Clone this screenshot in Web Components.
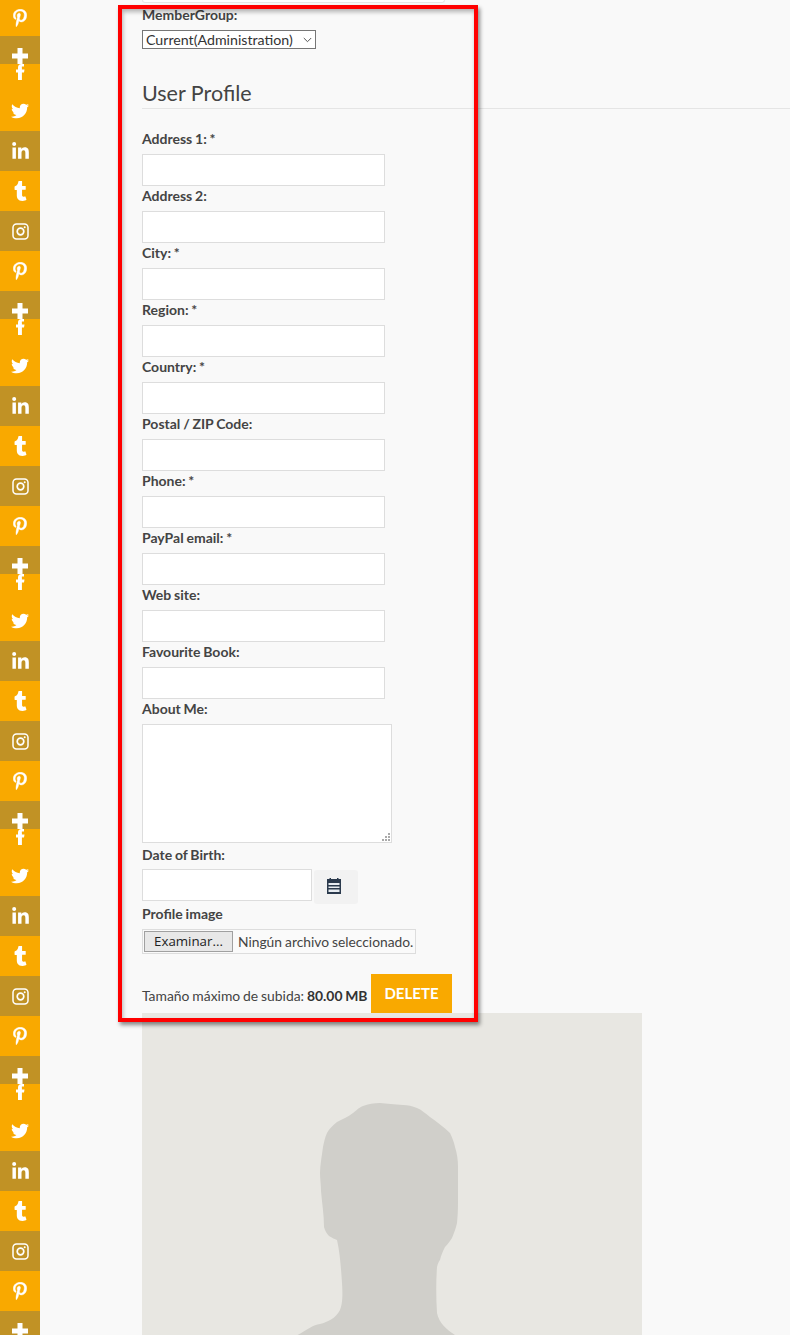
<!DOCTYPE html>
<html lang="en">
<head>
<meta charset="utf-8">
<title>User Profile</title>
<style>
  html, body { margin: 0; padding: 0; background: #f9f9f9; }
  body { font-family: Lato, "Liberation Sans", sans-serif; }
</style>
</head>
<body>
<profile-page>
  <social-rail slot="rail"></social-rail>

  <form-select label="MemberGroup:" value="Current(Administration)"></form-select>
  <section-title>User Profile</section-title>

  <text-field label="Address 1: *"></text-field>
  <text-field label="Address 2:"></text-field>
  <text-field label="City: *"></text-field>
  <text-field label="Region: *"></text-field>
  <text-field label="Country: *"></text-field>
  <text-field label="Postal / ZIP Code:"></text-field>
  <text-field label="Phone: *"></text-field>
  <text-field label="PayPal email: *"></text-field>
  <text-field label="Web site:"></text-field>
  <text-field label="Favourite Book:"></text-field>
  <area-field label="About Me:"></area-field>
  <date-field label="Date of Birth:"></date-field>
  <file-field label="Profile image" button="Examinar..." empty="Ningún archivo seleccionado."></file-field>
  <upload-limit size="80.00 MB">Tamaño máximo de subida:</upload-limit>
  <avatar-placeholder></avatar-placeholder>
</profile-page>

<script>
const fieldStyle = `
  label {
    display: block;
    font: bold 14px/19px Lato, "Liberation Sans", sans-serif;
    word-spacing: -.6px;
    color: #444;
    margin-bottom: 6px;
  }
  input, textarea {
    display: block;
    box-sizing: border-box;
    margin: 0;
    padding: 4px 8px;
    background: #fff;
    border: 1px solid #ddd;
    border-radius: 0;
    outline: none;
  }
`;

const ICONS = {
  pinterest: '<svg width="14" height="18" viewBox="0 0 384 512"><path fill="#fff" stroke="#fff" stroke-width="12" d="M204 6.5C101.4 6.5 0 74.9 0 185.6 0 256 39.6 296 63.6 296c9.9 0 15.6-27.6 15.6-35.4 0-9.3-23.7-29.1-23.7-67.8 0-80.4 61.2-137.4 140.4-137.4 68.1 0 118.5 38.7 118.5 109.8 0 53.1-21.3 152.7-90.3 152.7-24.9 0-46.2-18-46.2-43.8 0-37.8 26.4-74.4 26.4-113.4 0-66.2-93.9-54.2-93.9 25.8 0 16.8 2.1 35.4 9.6 50.7-13.8 59.4-42 147.9-42 209.1 0 18.9 2.7 37.5 4.5 56.4 3.4 3.8 1.7 3.4 6.9 1.5 50.4-69 48.6-82.5 71.4-172.8 12.3 23.4 44.1 36 69.3 36 106.2 0 153.9-103.5 153.9-196.8C384 71.3 298.2 6.5 204 6.5z"/></svg>',
  plus: '<svg width="16" height="16" viewBox="0 0 16 16"><path fill="#fff" d="M5.500 0h5v5.500H16v5h-5.500V16h-5v-5.500H0v-5h5.500z"/></svg>',
  facebook: '<svg width="10" height="16" viewBox="0 0 10 16"><path fill="#fff" d="M3 16V8.500H1V5.500h2V3.600C3 1.200 4.300 0 6.500 0H9v2.500H7.400C6.500 2.500 6.900 3.200 6.900 4v1.500H9.500L9 8.500H6.900V16z"/></svg>',
  twitter: '<svg width="18" height="18" viewBox="0 0 512 512"><path fill="#fff" d="M459.37 151.716c.325 4.548.325 9.097.325 13.645 0 138.72-105.583 298.558-298.558 298.558-59.452 0-114.68-17.219-161.137-47.106 8.447.974 16.568 1.299 25.34 1.299 49.055 0 94.213-16.568 130.274-44.832-46.132-.975-84.792-31.188-98.112-72.772 6.498.974 12.995 1.624 19.818 1.624 9.421 0 18.843-1.3 27.614-3.573-48.081-9.747-84.143-51.98-84.143-102.985v-1.299c13.969 7.797 30.214 12.67 47.431 13.319-28.264-18.843-46.781-51.005-46.781-87.391 0-19.492 5.197-37.36 14.294-52.954 51.655 63.675 129.3 105.258 216.365 109.807-1.624-7.797-2.599-15.918-2.599-24.04 0-57.828 46.782-104.934 104.934-104.934 30.213 0 57.502 12.67 76.67 33.137 23.715-4.548 46.456-13.645 66.599-25.665-7.798 24.366-23.69 45.283-45.283 57.93 21.117-2.274 41.584-8.122 60.426-16.243-14.292 20.791-32.161 39.308-52.628 54.253z"/></svg>',
  linkedin: '<svg width="17" height="19" viewBox="0 0 448 512"><path fill="#fff" d="M100.28 448H7.4V148.9h92.88zM53.79 108.1C24.09 108.1 0 83.5 0 53.8a53.79 53.79 0 0 1 107.58 0c0 29.7-24.1 54.3-53.79 54.3zM447.9 448h-92.68V302.4c0-34.7-.7-79.2-48.29-79.2-48.29 0-55.69 37.7-55.69 76.7V448h-92.78V148.9h89.08v40.8h1.3c12.4-23.5 42.69-48.3 87.88-48.3 94 0 111.28 61.9 111.28 142.3V448z"/></svg>',
  tumblr: '<svg width="13" height="20" viewBox="0 0 320 512"><path fill="#fff" d="M309.8 480.3c-13.6 14.5-50 31.7-97.4 31.7-120.8 0-147-88.8-147-140.6v-144H17.9c-5.500 0-10-4.500-10-10v-68c0-7.200 4.500-13.600 11.300-16 62-21.800 81.500-76 84.300-117.100.8-11 6.500-16.300 16.100-16.300h70.900c5.500 0 10 4.500 10 10v115.200h83c5.500 0 10 4.400 10 9.900v81.700c0 5.500-4.500 10-10 10h-83.400V360c0 34.200 23.700 53.600 68 35.800 4.800-1.900 9-3.200 12.700-2.200 3.500.9 5.800 3.400 7.400 7.900l22 64.300c1.800 5 3.300 10.600-.4 14.500z"/></svg>',
  instagram: '<svg width="17" height="17" viewBox="0 0 17 17"><rect x="1" y="1" width="15" height="15" rx="3.500" fill="none" stroke="#fff" stroke-width="1.500"/><circle cx="8.500" cy="8.500" r="3.300" fill="none" stroke="#fff" stroke-width="1.700"/><circle cx="12.700" cy="4.300" r="1" fill="#fff"/></svg>'
};

// one turn of the rail, it repeats every 255px
const RAIL_TURN = [
  { icon: 'plus', height: 28, pad: 12, dark: true },
  { icon: 'facebook', height: 27, pad: 0 },
  { icon: 'twitter', height: 40 },
  { icon: 'linkedin', height: 40, dark: true },
  { icon: 'tumblr', height: 40 },
  { icon: 'instagram', height: 40, dark: true },
  { icon: 'pinterest', height: 40 }
];

window.customElements.define('social-rail', class SocialRail extends HTMLElement {
  constructor() {
    super();
    const root = this.attachShadow({ mode: 'open' });
    const cell = (item) => {
      const top = item.pad !== undefined;
      return `<div class="cell${item.dark ? ' dark' : ''}${top ? ' top' : ''}" style="height:${item.height}px;${top ? `padding-top:${item.pad}px` : ''}">${ICONS[item.icon]}</div>`;
    };
    let cells = cell({ icon: 'pinterest', height: 36 });
    for (let i = 0; i < 6; i++) {
      cells += RAIL_TURN.map(cell).join('');
    }
    root.innerHTML = `
      <style>
        :host { display: flex; flex-direction: column; width: 40px; height: 1335px; overflow: hidden; }
        .cell {
          flex: none;
          box-sizing: border-box;
          display: flex;
          align-items: center;
          justify-content: center;
          background: #f9a900;
        }
        .cell.top { align-items: flex-start; }
        .cell.dark { background: #c19225; }
        svg { display: block; }
      </style>
      ${cells}
    `;
  }
});

window.customElements.define('form-select', class FormSelect extends HTMLElement {
  constructor() {
    super();
    this.attachShadow({ mode: 'open' }).innerHTML = `
      <style>
        ${fieldStyle}
        :host { display: block; }
        .box { position: relative; width: 174px; height: 19px; }
        select {
          appearance: none;
          display: block;
          box-sizing: border-box;
          width: 174px;
          height: 19px;
          margin: 0;
          padding: 0 0 0 3px;
          background: #fff;
          border: 1px solid #767676;
          border-radius: 0;
          color: #333;
          font: 14.200px/17px Lato, "Liberation Sans", sans-serif;
        }
        svg { position: absolute; right: 4px; top: 7px; }
      </style>
      <label>${this.getAttribute('label')}</label>
      <div class="box">
        <select><option>${this.getAttribute('value')}</option></select>
        <svg width="9" height="6" viewBox="0 0 9 6"><path d="M.8 1l3.700 3.700L8.200 1" fill="none" stroke="#555" stroke-width="1"/></svg>
      </div>
    `;
  }
});

window.customElements.define('section-title', class SectionTitle extends HTMLElement {
  constructor() {
    super();
    this.attachShadow({ mode: 'open' }).innerHTML = `
      <style>
        :host {
          display: block;
          margin: 30px -148px 20px 0;
          padding-bottom: 1px;
          border-bottom: 1px solid #e5e5e5;
          font: 21.500px/28px Lato, "Liberation Sans", sans-serif;
          color: #444;
        }
      </style>
      <slot></slot>
    `;
  }
});

window.customElements.define('text-field', class TextField extends HTMLElement {
  constructor() {
    super();
    this.attachShadow({ mode: 'open' }).innerHTML = `
      <style>
        ${fieldStyle}
        :host { display: block; }
        input { width: 243px; height: 32px; }
      </style>
      <label>${this.getAttribute('label')}</label>
      <input type="text">
    `;
  }
});

window.customElements.define('area-field', class AreaField extends HTMLElement {
  constructor() {
    super();
    this.attachShadow({ mode: 'open' }).innerHTML = `
      <style>
        ${fieldStyle}
        :host { display: block; }
        .box { position: relative; width: 250px; height: 119px; margin-bottom: 2px; }
        textarea { width: 250px; height: 119px; resize: none; }
        svg { position: absolute; right: 2px; bottom: 2px; }
      </style>
      <label>${this.getAttribute('label')}</label>
      <div class="box">
        <textarea></textarea>
        <svg width="9" height="9" viewBox="0 0 9 9"><path fill="#aaa" d="M7 1h2v2H7zM4 4h2v2H4zM7 4h2v2H7zM1 7h2v2H1zM4 7h2v2H4zM7 7h2v2H7z"/></svg>
      </div>
    `;
  }
});

window.customElements.define('date-field', class DateField extends HTMLElement {
  constructor() {
    super();
    this.attachShadow({ mode: 'open' }).innerHTML = `
      <style>
        ${fieldStyle}
        :host { display: block; }
        label { margin-bottom: 5px; }
        .row { display: flex; align-items: flex-start; gap: 2px; height: 35px; }
        input { width: 170px; height: 32px; }
        button {
          display: flex;
          align-items: center;
          justify-content: center;
          box-sizing: border-box;
          width: 44px;
          height: 34px;
          margin: 1px 0 0;
          padding: 0 4px 2px 0;
          background: #f2f2f2;
          border: 0;
          border-radius: 3px;
        }
      </style>
      <label>${this.getAttribute('label')}</label>
      <div class="row">
        <input type="text">
        <button type="button" aria-label="Calendar">
          <svg width="14" height="16" viewBox="0 0 14 16">
            <path fill="#2b3a4d" d="M0 1h2.500V0h1.500v1h6V0h1.500v1H14v15H0z"/>
            <path fill="#e8edf2" d="M1.500 5h11v2h-11zM1.500 8.500h11V10h-11zM1.500 11.500h11V14h-11z"/>
          </svg>
        </button>
      </div>
    `;
  }
});

window.customElements.define('file-field', class FileField extends HTMLElement {
  constructor() {
    super();
    this.attachShadow({ mode: 'open' }).innerHTML = `
      <style>
        ${fieldStyle}
        :host { display: block; }
        .file {
          box-sizing: border-box;
          display: flex;
          align-items: center;
          width: 274px;
          height: 25px;
          padding: 0 0 0 1px;
          background: #fafafa;
          border: 1px solid #ddd;
          white-space: nowrap;
        }
        button {
          flex: none;
          box-sizing: border-box;
          width: 89px;
          height: 21px;
          margin: 0 5px 0 0;
          padding: 0;
          background: #e8e8e8;
          border: 1px solid #a0a0a0;
          color: #222;
          font: 13.300px/19px "Open Sans", "Noto Sans", sans-serif;
        }
        span {
          font: 13.800px/19px Lato, "Liberation Sans", sans-serif;
          word-spacing: -.5px;
          color: #444;
        }
      </style>
      <label>${this.getAttribute('label')}</label>
      <div class="file">
        <button type="button">${this.getAttribute('button')}</button>
        <span>${this.getAttribute('empty')}</span>
      </div>
    `;
  }
});

window.customElements.define('upload-limit', class UploadLimit extends HTMLElement {
  constructor() {
    super();
    this.attachShadow({ mode: 'open' }).innerHTML = `
      <style>
        :host {
          display: flex;
          align-items: center;
          margin-top: 20px;
          height: 39px;
          font: 13.900px/19px Lato, "Liberation Sans", sans-serif;
          word-spacing: -.7px;
          color: #444;
          white-space: nowrap;
        }
        .text { width: 226px; margin-top: 3px; }
        b { color: #333; }
        button {
          width: 81px;
          height: 39px;
          margin: 0 0 0 3px;
          padding: 0;
          background: #f9a900;
          border: 0;
          color: #fff;
          font: bold 15px/39px Lato, "Liberation Sans", sans-serif;
        }
      </style>
      <div class="text"><slot></slot> <b>${this.getAttribute('size')}</b></div>
      <button type="button">DELETE</button>
    `;
  }
});

window.customElements.define('avatar-placeholder', class AvatarPlaceholder extends HTMLElement {
  constructor() {
    super();
    this.attachShadow({ mode: 'open' }).innerHTML = `
      <style>
        :host { display: block; width: 500px; height: 500px; background: #e8e7e2; }
        svg { display: block; }
      </style>
      <svg width="500" height="500" viewBox="0 0 500 500">
        <path fill="#d0cfca" d="M238 90C232 90 226 91 221 93C216 95 214 98 211 100C206 104 200 106 195 109C191 112 187 116 185 120C183 124 182 129 181 134C180 142 178 152 178 160C178 166 179 172 179 178C180 190 182 202 182 214C183 218 185 221 187 223C190 225 193 226 195 227C198 240 199 255 200 270C201 285 200 292 198 297C194 305 186 309 178 311C170 312 164 318 150 325C120 338 80 350 60 380L60 500L440 500L440 380C420 350 350 345 313 322C304 316 297 310 295 300C294 285 294 268 295 254C296 250 297 248 298 247C299 242 301 238 303 234C306 231 308 228 310 225C312 220 314 215 315 210C316 200 316 195 316 187C316 175 316 165 316 154C316 147 315 140 313 134C312 129 310 124 308 120C302 114 295 109 288 104C284 101 280 97 275 95C270 93 266 92 261 92C252 91 245 91 238 90Z"/>
      </svg>
    `;
  }
});

window.customElements.define('profile-page', class ProfilePage extends HTMLElement {
  constructor() {
    super();
    this.attachShadow({ mode: 'open' }).innerHTML = `
      <style>
        :host {
          display: flex;
          position: relative;
          width: 790px;
          height: 1335px;
          overflow: hidden;
          background: #f9f9f9;
        }
        main { flex: none; width: 500px; margin-left: 102px; }
        .strip {
          box-sizing: border-box;
          width: 303px;
          height: 3px;
          background: #fff;
          border: 1px solid #e6e6e6;
          border-top: 0;
          border-radius: 0 0 5px 5px;
          margin-bottom: 2px;
        }
        /* the red marker drawn over the screenshot */
        .marker {
          position: absolute;
          left: 118px;
          top: 5px;
          width: 360px;
          height: 1017px;
          box-sizing: border-box;
          border: 4px solid #f00;
          box-shadow: 2px 3px 4px rgba(0, 0, 0, .45), inset 1px 3px 4px rgba(0, 0, 0, .28);
          pointer-events: none;
        }
      </style>
      <slot name="rail"></slot>
      <main>
        <div class="strip"></div>
        <slot></slot>
      </main>
      <div class="marker"></div>
    `;
  }
});
</script>
</body>
</html>
